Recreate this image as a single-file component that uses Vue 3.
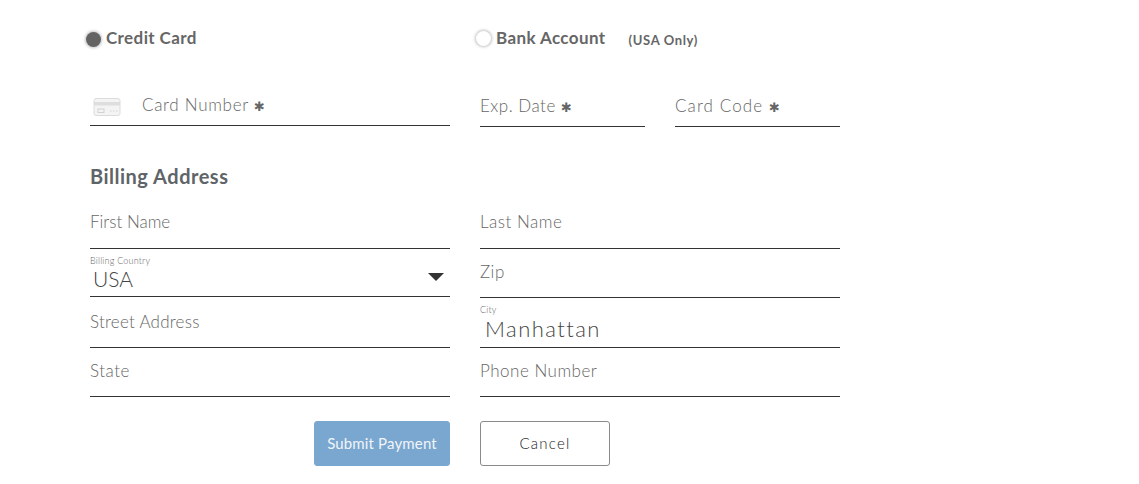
<script setup>
import { ref } from 'vue'

const method = ref('card')
const cardMethods = [
  { id: 'card', label: 'Credit Card' },
  { id: 'bank', label: 'Bank Account', note: '(USA Only)' }
]
</script>

<template>
  <form class="payment" @submit.prevent>
    <div class="methods">
      <label v-for="m in cardMethods" :key="m.id" class="method" :class="m.id">
        <span class="radio" :class="{ checked: method === m.id }" @click="method = m.id"></span>
        <span class="method-label">{{ m.label }}</span>
        <span v-if="m.note" class="method-note">{{ m.note }}</span>
      </label>
    </div>

    <div class="card-row">
      <div class="field card-number">
        <svg class="card-icon" width="28" height="18" viewBox="0 0 28 18">
          <rect x="1" y="0.5" width="26" height="17" rx="2" fill="#f4f4f4" stroke="#dcdcdc" />
          <rect x="1" y="4" width="26" height="3.5" fill="#dedede" />
          <rect x="5" y="11" width="6" height="3.5" fill="none" stroke="#d2d2d2" />
          <path d="M17 13h1.5M20 13h1.5M23 13h1.5" stroke="#d2d2d2" />
        </svg>
        <span class="placeholder number">Card Number <i class="req">✱</i></span>
      </div>
      <div class="small-fields">
        <div class="field small"><span class="placeholder">Exp. Date <i class="req">✱</i></span></div>
        <div class="field small"><span class="placeholder code">Card Code <i class="req">✱</i></span></div>
      </div>
    </div>

    <h2 class="section-title">Billing Address</h2>

    <div class="address">
      <div class="col">
        <div class="field h50 first"><span class="placeholder tight">First Name</span></div>
        <div class="field select h48">
          <small class="float">Billing Country</small>
          <span class="value country">USA</span>
          <span class="arrow"></span>
        </div>
        <div class="field h51"><span class="placeholder street">Street Address</span></div>
        <div class="field h49"><span class="placeholder">State</span></div>
      </div>
      <div class="col">
        <div class="field h50 first"><span class="placeholder">Last Name</span></div>
        <div class="field h49"><span class="placeholder">Zip</span></div>
        <div class="field h50 filled">
          <small class="float">City</small>
          <span class="value city">Manhattan</span>
        </div>
        <div class="field h49"><span class="placeholder">Phone Number</span></div>
      </div>
    </div>

    <div class="actions">
      <div class="action-left"><button type="submit" class="btn submit">Submit Payment</button></div>
      <div class="action-right"><button type="button" class="btn cancel">Cancel</button></div>
    </div>
  </form>
</template>

<style scoped>
.payment {
  width: 750px;
  margin-left: 90px;
  font-family: "Lato", "Liberation Sans", sans-serif;
  color: #666;
}

/* радио */
.methods {
  display: flex;
  height: 80px;
  padding-top: 28px;
  box-sizing: border-box;
}

.method {
  display: flex;
  flex: none;
  align-items: flex-start;
  width: 390px;
  height: 22px;
}

.radio {
  width: 15px;
  height: 15px;
  margin: 4px 5px 0 -4px;
  border-radius: 50%;
  background: #fff;
  box-shadow: 0 0 3px 1px rgba(0, 0, 0, 0.25);
  flex: none;
}

.radio.checked {
  background: #636363;
}

.bank .radio {
  margin-top: 3px;
}

.method-label {
  font-size: 17px;
  font-weight: 700;
  line-height: 20px;
  letter-spacing: 0.4px;
  color: #666;
}

.method-note {
  margin: 3px 0 0 23px;
  font-size: 13px;
  font-weight: 700;
  line-height: 18px;
  letter-spacing: 0.65px;
}

/* поля */
.field {
  position: relative;
  display: flex;
  align-items: flex-end;
  box-sizing: border-box;
  padding-bottom: 15px;
  border-bottom: 1px solid #333;
}

.first {
  padding-bottom: 16px;
}

.placeholder {
  font-size: 17px;
  font-weight: 300;
  line-height: 20px;
  letter-spacing: 0.5px;
  color: #666;
}

.tight {
  letter-spacing: 0;
}

.street {
  letter-spacing: 0.25px;
}

.number {
  letter-spacing: 0.7px;
}

.code {
  letter-spacing: 1.1px;
}

.req {
  font-family: "DejaVu Sans", sans-serif;
  font-style: normal;
  font-weight: 400;
  font-size: 13px;
  letter-spacing: 0;
  vertical-align: 0;
}

.card-row {
  display: flex;
  gap: 30px;
  align-items: flex-start;
}

.card-number {
  width: 360px;
  height: 46px;
  padding-bottom: 8px;
}

.card-icon {
  margin: 0 21px 1px 3px;
}

.small-fields {
  display: flex;
  gap: 30px;
}

.small {
  width: 165px;
  height: 47px;
  padding-bottom: 8px;
}

.section-title {
  margin: 37px 0 0;
  height: 25px;
  font-size: 20px;
  font-weight: 700;
  line-height: 25px;
  letter-spacing: 0.5px;
  color: #5f6468;
}

.address {
  display: flex;
  gap: 30px;
  margin-top: 10px;
}

.col {
  display: flex;
  flex-direction: column;
  width: 360px;
}

.h48 { height: 48px; }
.h49 { height: 49px; }
.h50 { height: 50px; }
.h51 { height: 51px; }

.float {
  position: absolute;
  left: 0;
  top: 7px;
  font-size: 9px;
  font-weight: 300;
  line-height: 10px;
  letter-spacing: 0.2px;
  color: #666;
}

.value {
  font-weight: 300;
  font-size: 22px;
  line-height: 26px;
  color: #444;
}

.select {
  padding-bottom: 4px;
}

.filled {
  padding-bottom: 5px;
}

.country {
  margin-left: 3px;
  font-size: 21px;
  letter-spacing: 0;
}

.city {
  margin-left: 5px;
  letter-spacing: 1.45px;
}

.arrow {
  position: absolute;
  right: 6px;
  top: 24px;
  width: 0;
  height: 0;
  border-left: 8px solid transparent;
  border-right: 8px solid transparent;
  border-top: 8px solid #333;
}

/* кнопки */
.actions {
  display: flex;
  gap: 30px;
  margin-top: 24px;
}

.action-left {
  display: flex;
  justify-content: flex-end;
  width: 360px;
}

.btn {
  height: 45px;
  box-sizing: border-box;
  border-radius: 3px;
  font-family: inherit;
  font-size: 15px;
  padding: 0 0 2px;
  cursor: pointer;
}

.submit {
  width: 136px;
  border: 1px solid #7aa7cf;
  background: #7aa7cf;
  color: #f0f4f9;
  letter-spacing: 0.15px;
}

.cancel {
  width: 130px;
  border: 1px solid #8a8a8a;
  background: #fff;
  color: #222;
  font-weight: 300;
  letter-spacing: 1.2px;
}
</style>
